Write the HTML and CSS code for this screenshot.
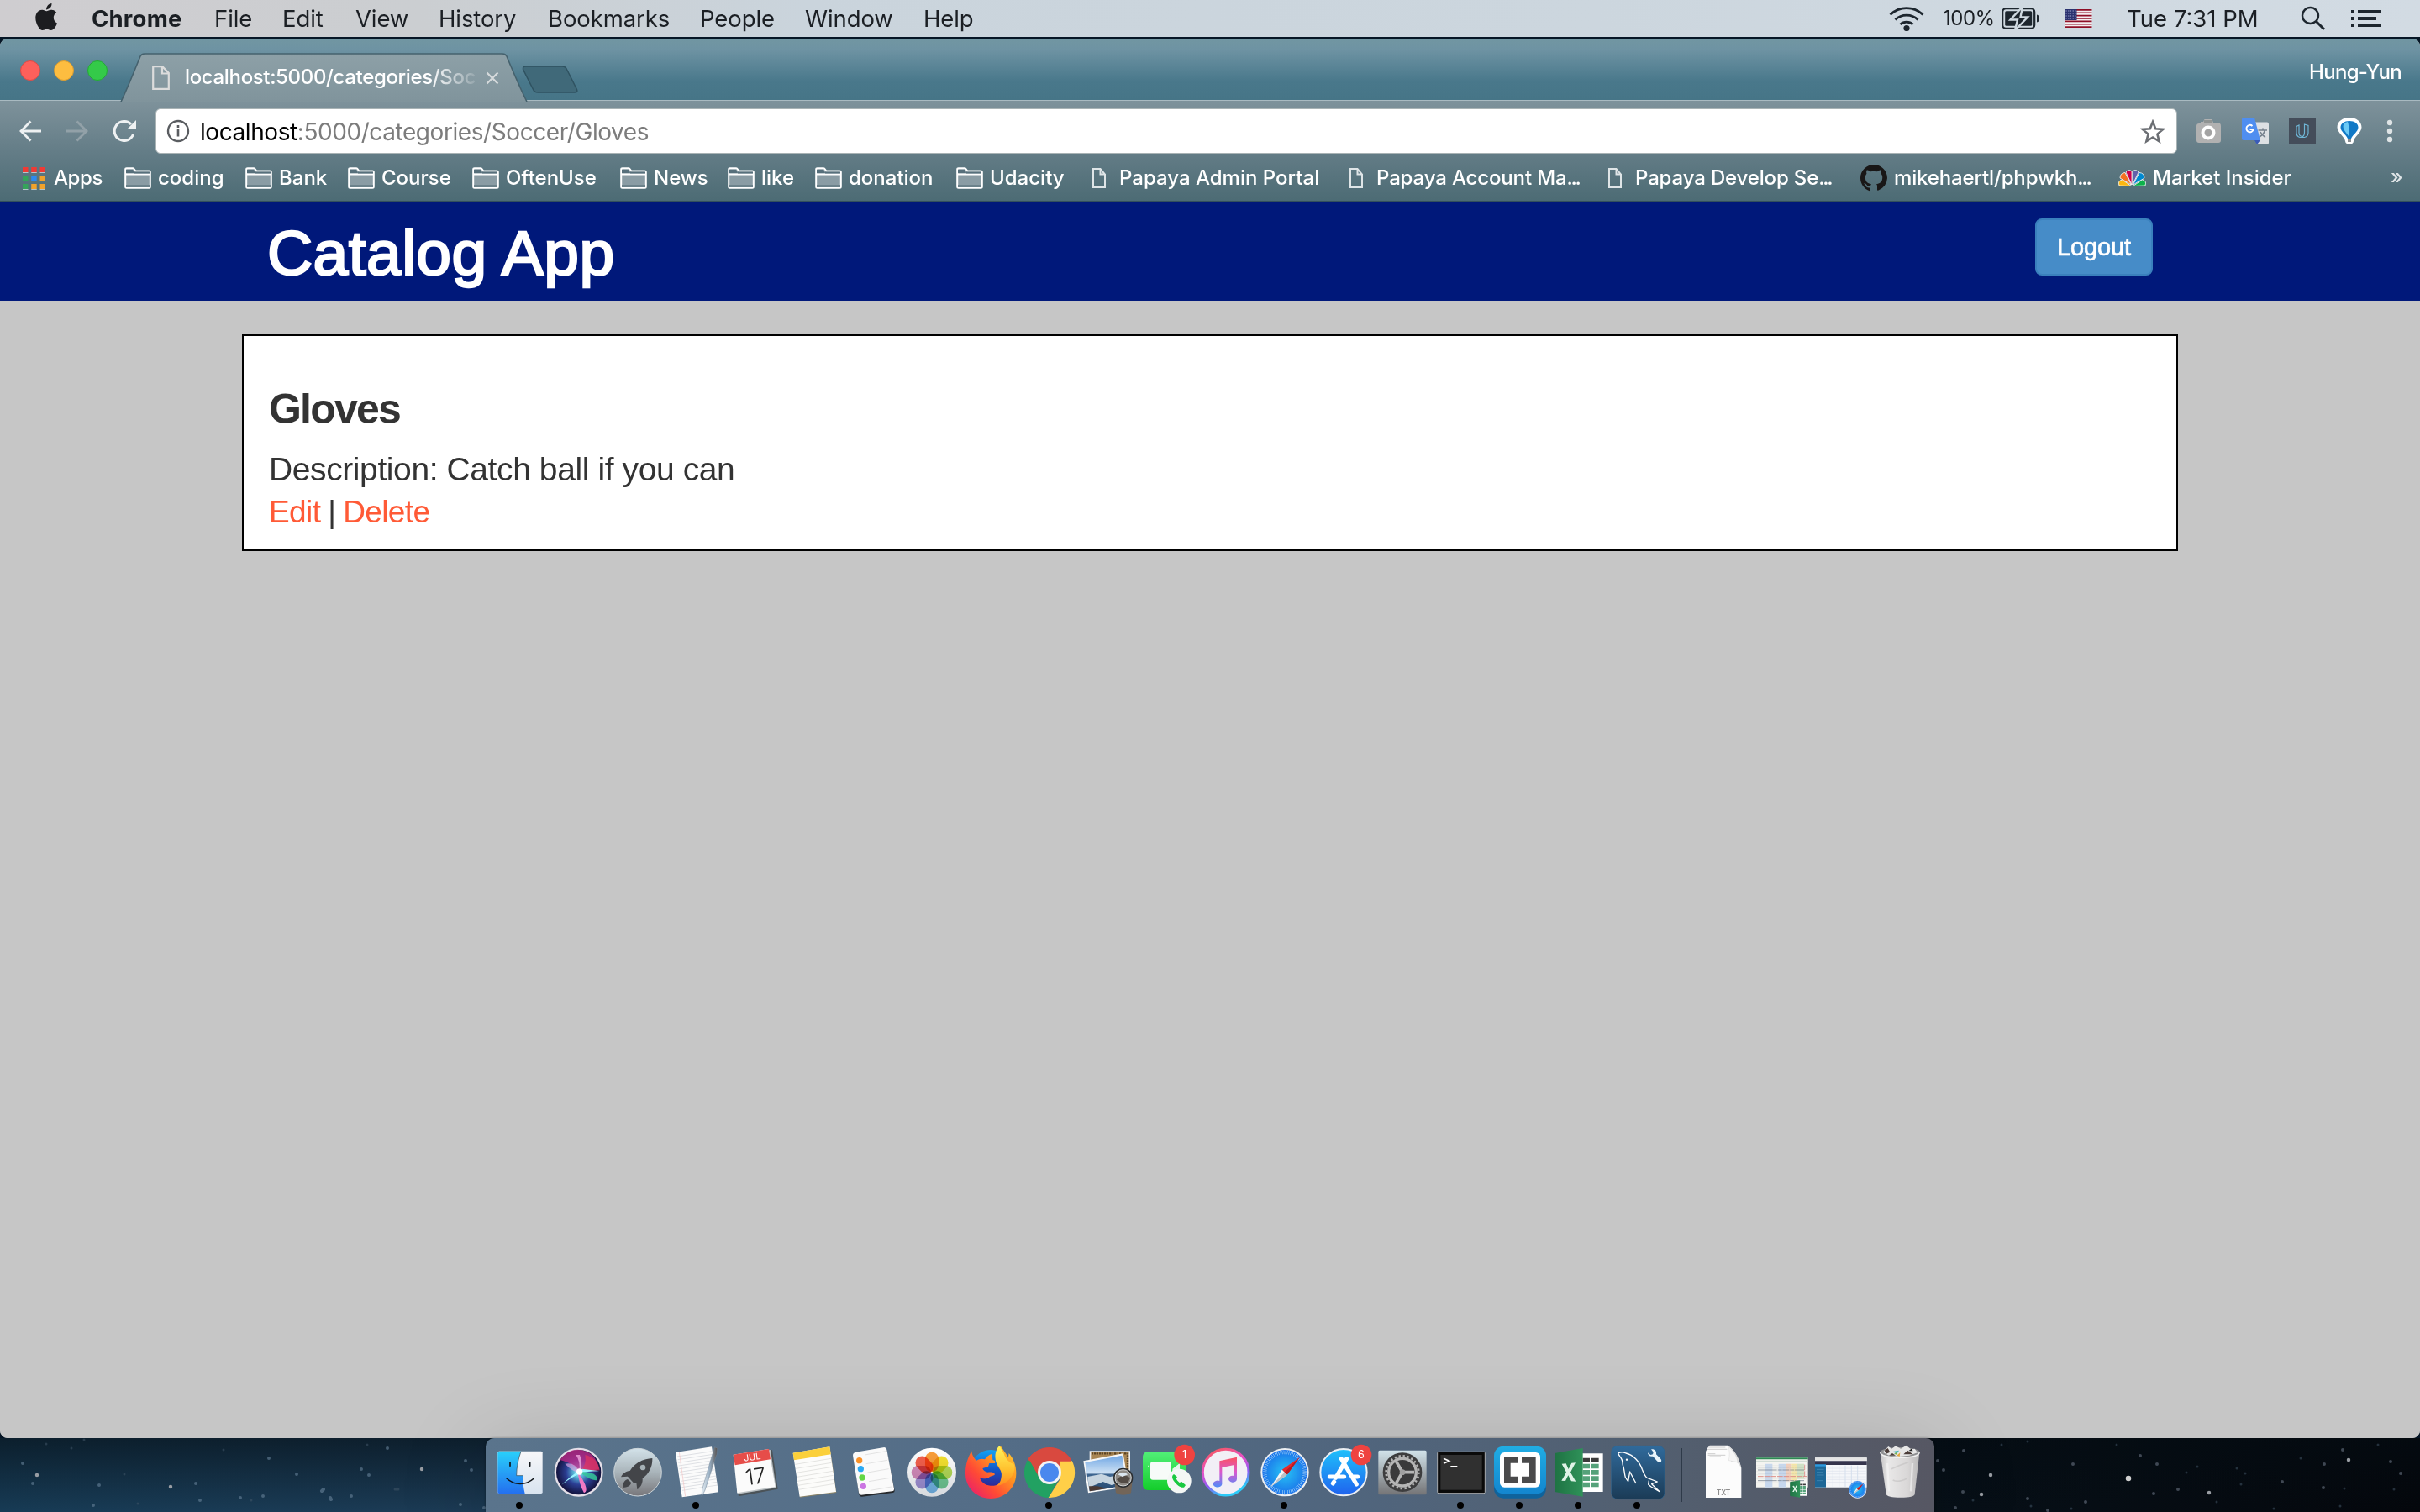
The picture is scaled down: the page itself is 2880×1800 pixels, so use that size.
FILE: index.html
```html
<!DOCTYPE html>
<html lang="en">
<head>
<meta charset="utf-8">
<title>Catalog App</title>
<link rel="stylesheet" href="styles.css">
</head>
<body>
<svg class="defs" width="0" height="0" aria-hidden="true">
  <defs>
    <symbol id="folder" viewBox="0 0 32 26">
      <path d="M1.2 22.8V2.6q0-1.4 1.4-1.4h7.6q1 0 1.5 1l1.6 2.3h16q1.500 0 1.500 1.500v17.300q0 1.500-1.500 1.500H2.700q-1.500 0-1.500-1.500z" fill="#8a9ca4" stroke="#fff" stroke-width="2"/>
      <path d="M1 8.500h30" stroke="#fff" stroke-width="2"/>
      <path d="M2 3h8l2 4H2zM12 5.500h18v2H12z" fill="#566f7b"/>
      <path d="M2 21h28v3H2z" fill="#6c828b"/>
    </symbol>
    <symbol id="page" viewBox="0 0 16 24">
      <path d="M1 1h8.500L15 7.500V23H1zM9.500 1v6.500H15" fill="none" stroke="#dfe5e7" stroke-width="2"/>
    </symbol>
    <linearGradient id="finderBlue" x2="0" y2="1"><stop stop-color="#29d0fb"/><stop offset="1" stop-color="#2470ef"/></linearGradient>
    <linearGradient id="finderWhite" x2="0" y2="1"><stop stop-color="#f7f7f9"/><stop offset="1" stop-color="#d9e4f0"/></linearGradient>
    <radialGradient id="siriBase"><stop stop-color="#d8fbff"/><stop offset=".22" stop-color="#58b9d8"/><stop offset=".55" stop-color="#2c3f95"/><stop offset="1" stop-color="#13123c"/></radialGradient>
    <linearGradient id="launch" x2="0" y2="1"><stop stop-color="#d3e2e9"/><stop offset=".5" stop-color="#a9b4ba"/><stop offset="1" stop-color="#77767a"/></linearGradient>
    <linearGradient id="pen" x2="1"><stop stop-color="#e9f0f5"/><stop offset=".5" stop-color="#9ab0c4"/><stop offset="1" stop-color="#54504f"/></linearGradient>
    <linearGradient id="whiteDisc" x2="0" y2="1"><stop stop-color="#fff"/><stop offset="1" stop-color="#d6d9dd"/></linearGradient>
    <linearGradient id="foxBody" x1="1" x2="0" y2="1"><stop stop-color="#ffd53a"/><stop offset=".35" stop-color="#ff9620"/><stop offset=".65" stop-color="#ff4a35"/><stop offset="1" stop-color="#e3137c"/></linearGradient>
    <linearGradient id="foxFlame" x2="0" y2="1"><stop stop-color="#fff55c"/><stop offset=".6" stop-color="#ffc02e"/><stop offset="1" stop-color="#ff8a1f"/></linearGradient>
    <linearGradient id="foxBlue" x2="0" y2="1"><stop stop-color="#13a3f3"/><stop offset=".5" stop-color="#1357c9"/><stop offset="1" stop-color="#36208c"/></linearGradient>
    <linearGradient id="sky" x2="0" y2="1"><stop stop-color="#6fa6e4"/><stop offset=".5" stop-color="#cfe2f4"/><stop offset=".52" stop-color="#3e6691"/><stop offset="1" stop-color="#27496e"/></linearGradient>
    <linearGradient id="green" x2="0" y2="1"><stop stop-color="#52ef78"/><stop offset="1" stop-color="#14cd2b"/></linearGradient>
    <linearGradient id="ring" x2=".4" y2="1"><stop stop-color="#fb5a4f"/><stop offset=".45" stop-color="#e650c8"/><stop offset=".75" stop-color="#8a5cf6"/><stop offset="1" stop-color="#2dcaf8"/></linearGradient>
    <linearGradient id="note" x2="0" y2="1"><stop stop-color="#fb5062"/><stop offset=".5" stop-color="#d958cf"/><stop offset="1" stop-color="#4f8cf8"/></linearGradient>
    <radialGradient id="compass"><stop stop-color="#28c4f4"/><stop offset="1" stop-color="#1a72ea"/></radialGradient>
    <linearGradient id="store" x2="0" y2="1"><stop stop-color="#1fc1fb"/><stop offset="1" stop-color="#1f62ee"/></linearGradient>
    <linearGradient id="prefs" x2="0" y2="1"><stop stop-color="#d2e3ea"/><stop offset="1" stop-color="#747476"/></linearGradient>
    <linearGradient id="brk" x2="0" y2="1"><stop stop-color="#20ade4"/><stop offset="1" stop-color="#1386cf"/></linearGradient>
    <linearGradient id="xl" x2="1" y2="0"><stop stop-color="#1e7243"/><stop offset="1" stop-color="#2f9259"/></linearGradient>
    <linearGradient id="mysql" x2="0" y2="1"><stop stop-color="#306a9b"/><stop offset="1" stop-color="#1b3b56"/></linearGradient>
    <linearGradient id="trash" x2="1" y2="0"><stop stop-color="#c4c3c4"/><stop offset=".2" stop-color="#e9e8e8"/><stop offset=".7" stop-color="#d9d7d7"/><stop offset="1" stop-color="#b9b8b9"/></linearGradient>
    <symbol id="excel" viewBox="20 34 176 177">
      <path d="M118 55h76v137h-76z" fill="#fff"/>
      <path d="M122 71h25v16h-25zM151 71h28v16h-28z" fill="#3c3c3c"/>
      <path d="M122 92h25v17h-25zM151 92h28v17h-28zM122 114h25v17h-25zM151 114h28v17h-28zM122 136h25v17h-25zM151 136h28v17h-28zM122 158h25v17h-25zM151 158h28v17h-28z" fill="#55a27a"/>
      <path d="M21 54l101-18v173L21 192z" fill="url(#xl)"/>
      <path d="M47 92l15-1 9 20 11-22 14-1-18 34 19 33-16-1-11-21-10 20-14-1 17-30z" fill="#dff3e7"/>
    </symbol>
    <symbol id="safari" viewBox="20 34 176 176">
      <circle cx="108" cy="122" r="86" fill="#eceff2"/>
      <circle cx="108" cy="122" r="80" fill="url(#compass)"/>
      <circle cx="108" cy="122" r="71" fill="none" stroke="#bfe4fb" stroke-width="13" stroke-dasharray="1.600 4.600"/>
      <path d="M161 69l-45 62-18-18z" fill="#e8282c"/><path d="M161 69l-45 62-9-9z" fill="#b81c22"/>
      <path d="M57 175l41-62 18 18z" fill="#f4f4f4"/><path d="M57 175l50-53 9 9z" fill="#b9c0c6"/>
    </symbol>
  </defs>
</svg>

<header class="menubar">
  <svg class="apple" viewBox="2 0 20.500 24" preserveAspectRatio="none"><path fill="#1c1d20" d="M12.152 6.896c-.948 0-2.415-1.078-3.960-1.040-2.040.027-3.910 1.183-4.961 3.014-2.117 3.675-.546 9.103 1.519 12.090 1.013 1.454 2.208 3.090 3.792 3.039 1.520-.065 2.090-.987 3.935-.987 1.831 0 2.350.987 3.960.948 1.637-.026 2.676-1.480 3.676-2.948 1.156-1.688 1.636-3.325 1.662-3.415-.039-.013-3.182-1.221-3.220-4.857-.026-3.040 2.480-4.494 2.597-4.559-1.429-2.090-3.623-2.324-4.390-2.376-2-.156-3.675 1.090-4.610 1.090zM15.530 3.830c.843-1.012 1.400-2.427 1.245-3.830-1.207.052-2.662.805-3.532 1.818-.780.896-1.454 2.338-1.273 3.714 1.338.104 2.715-.688 3.559-1.701"/></svg>
  <nav class="menus">
    <b>Chrome</b><span>File</span><span>Edit</span><span>View</span><span>History</span><span>Bookmarks</span><span>People</span><span>Window</span><span>Help</span>
  </nav>
  <div class="status">
    <svg class="wifi" viewBox="0 0 42 30" fill="none" stroke="#1d262e" stroke-width="2.800"><path d="M1.500 10.500a28 28 0 0 1 39 0M7.500 16.500a19.500 19.500 0 0 1 27 0M13.500 22a11 11 0 0 1 15 0"/><circle cx="21" cy="26.500" r="2.200" fill="#1d262e"/></svg>
    <span class="pct">100%</span>
    <svg class="battery" viewBox="0 0 46 26"><rect x="1.200" y="1.200" width="38" height="23.600" rx="4" fill="none" stroke="#1d262e" stroke-width="2.200"/><rect x="4.200" y="4.200" width="32" height="17.600" rx="1.500" fill="#1d262e"/><path d="M42 8.500q3 .5 3 4.500t-3 4.500z" fill="#1d262e"/><path d="M25-1L10.500 14.500H19L16 27 31 11.500h-8.500z" fill="#1d262e" stroke="#cfd9e1" stroke-width="2.400"/></svg>
    <svg class="flag" viewBox="0 0 32 22"><path fill="#f4eef0" d="M0 0h32v22H0z"/><path d="M0 .85h32M0 4.230h32M0 7.600h32M0 11h32M0 14.400h32M0 17.770h32M0 21.150h32" stroke="#8e0f26" stroke-width="1.700"/><path fill="#2b3270" d="M0 0h14v13H0z"/><path d="M1 2h12M1 5h12M1 8h12M1 11h12" stroke="#aab0d4" stroke-width="1.200" stroke-dasharray="1.200 1.500"/></svg>
    <span class="clock">Tue 7:31 PM</span>
    <svg class="search" viewBox="0 0 30 30" fill="none" stroke="#1d262e"><circle cx="11.500" cy="11.500" r="9.500" stroke-width="2.400"/><path d="M18.500 18.500l9.500 9.500" stroke-width="3"/></svg>
    <svg class="list" viewBox="0 0 36 20" fill="#1d262e"><path d="M0 0h4v4H0zM8 0h28v4H8zM0 8h4v4H0zM8 8h22v4H8zM0 16h4v4H0zM8 16h28v4H8z"/></svg>
  </div>
</header>

<main class="window">
  <div class="tabstrip">
    <div class="lights"><i class="red"></i><i class="amber"></i><i class="green"></i></div>
    <div class="tab">
      <svg class="tab-shape" viewBox="0 0 486 58"><defs><linearGradient id="tabFill" x2="0" y2="1"><stop stop-color="#8da0a7"/><stop offset="1" stop-color="#80949c"/></linearGradient></defs><path d="M1 58C8 44 19 16 24 4q1.500-3 5-3h426q3.500 0 5 3c5 12 17 40 24 54" fill="url(#tabFill)" stroke="#45616d" stroke-width="1.600"/></svg>
      <svg class="tab-icon" viewBox="0 0 21 29"><path d="M1.200 1.200h11L19.800 9v18.800H1.200zM12 1.200V9.500h8" fill="none" stroke="#dcdcdc" stroke-width="2.200"/></svg>
      <span class="tab-title">localhost:5000/categories/Soc</span>
      <svg class="tab-close" viewBox="0 0 16 16"><path d="M1.500 1.500l13 13M14.500 1.500l-13 13" stroke="#d6dadc" stroke-width="2.200"/></svg>
    </div>
    <svg class="newtab" viewBox="0 0 68 34"><path d="M4 1h44q4 0 5.500 3.500l12 24q1.500 3.500-2.500 3.500H19q-4 0-5.500-3.500L1.500 4.500Q1 1 4 1z" fill="#406979" stroke="#2f5260" stroke-width="1.500"/></svg>
    <span class="profile">Hung-Yun</span>
  </div>

  <div class="toolbar">
    <div class="nav-row">
      <svg class="back" viewBox="0 0 26 26" fill="none" stroke="#eef1f2" stroke-width="2.800"><path d="M26 13H2.500M13.500 1.500L2 13l11.500 11.500"/></svg>
      <svg class="forward" viewBox="0 0 26 26" fill="none" stroke="#92a1a8" stroke-width="2.800"><path d="M0 13h23.500M12.500 1.500L24 13 12.500 24.500"/></svg>
      <svg class="reload" viewBox="0 0 28 26"><path d="M24.500 17A11.500 11.500 0 1 1 22 5" fill="none" stroke="#eef1f2" stroke-width="3"/><path d="M28 0v11H17z" fill="#eef1f2"/></svg>
      <div class="omnibox">
        <svg class="info" viewBox="0 0 28 28"><circle cx="14" cy="14" r="12" fill="none" stroke="#5a5d61" stroke-width="2.400"/><path d="M14 12v8.500M14 7v3" stroke="#5a5d61" stroke-width="2.600"/></svg>
        <span class="url"><span class="host">localhost</span>:5000/categories/Soccer/Gloves</span>
        <svg class="star" viewBox="0 0 30 29"><path d="M15 3l3.300 8.300 8.900.6-6.800 5.700 2.200 8.700L15 21.500l-7.600 4.800 2.200-8.700-6.800-5.700 8.900-.6z" fill="none" stroke="#6b6e73" stroke-width="2.600"/></svg>
      </div>
      <svg class="ext cam" viewBox="0 0 32 32"><path d="M2 10q0-3 3-3h2V5h3l1.500-3h9L22 6h5q4 0 4 4v17q0 3-3 3H5q-3 0-3-3z" fill="#b1b1b1"/><path d="M11 3h10v3H11z" fill="#8f9392"/><circle cx="16" cy="18" r="6.500" fill="#a3a3a3" stroke="#fff" stroke-width="4"/></svg>
      <svg class="ext tr" viewBox="0 0 32 32"><path d="M12 5.500h18q2 0 2 2V30q0 2-2 2H18z" fill="#dde0e3"/><path d="M0 2q0-2 2-2h13l7 27H2q-2 0-2-2z" fill="#4f8ef0"/><path d="M15 27h7l-4 5z" fill="#3a5bb8"/><path d="M12.500 10a4.200 4.200 0 1 0 1.200 4H9.500" fill="none" stroke="#fff" stroke-width="2"/><path d="M19.500 15H30M25 12.500V15M27.500 15q-1.500 5-6.500 8M22 17q2 4 6 6.500" fill="none" stroke="#75808c" stroke-width="1.600"/></svg>
      <svg class="ext ud" viewBox="0 0 32 32"><path fill="#444d5a" d="M0 0h32v32H0z"/><path d="M9 10.500l3-1.500v9q0 4 3.500 4.500-1 1-2.500 1-4-1-4-6zM18.500 8l4.500 1.500V18q0 4.500-4.500 5.500h-4q4-1 4-6z" fill="none" stroke="#6fb6d6" stroke-width="1.200"/></svg>
      <svg class="ext bal" viewBox="0 0 32 32"><path d="M16 0C8 0 1.500 4.500 1.500 11.500 1.500 18 10.500 23 11 28q.5 3.800 5 3.800t5-3.800C21.500 23 30.500 18 30.500 11.500 30.500 4.500 24 0 16 0z" fill="#fff"/><path d="M16 4C10 4 5.500 7 5.500 11.500 5.500 17 12 20 14 25h4C20 20 26.500 17 26.500 11.500 26.500 7 22 4 16 4z" fill="#1279c6"/><path d="M14 5c-5 1-6 4-5 8 1 3 4 6 6 9 0-4 1-12-1-17z" fill="#6ccaf6"/><path d="M14 25h4v4h-4z" fill="#8a8d90"/></svg>
      <svg class="dots" viewBox="0 0 8 28" fill="#dfe4e6"><circle cx="4" cy="4" r="3.200"/><circle cx="4" cy="14" r="3.200"/><circle cx="4" cy="24" r="3.200"/></svg>
    </div>
    <div class="bookmarks">
      <span class="bm apps"><svg viewBox="0 0 27 27"><path d="M0 0h6.500v6H0zM10.200 0h6.500v6h-6.500zM20.500 0H27v6h-6.500z" fill="#f03a34"/><path d="M0 10h6.500v6H0zM0 20h6.500v6H0z" fill="#35a35a"/><path d="M10.200 10h6.500v6h-6.500z" fill="#2b8af0"/><path d="M20.500 10H27v6h-6.500zM10.200 20h6.500v6h-6.500zM20.500 20H27v6h-6.500z" fill="#f0a22b"/><path d="M0 6.500h27M0 16.500h27M0 26.500h27" stroke="#b4c4ca" stroke-dasharray="6.500 3.750"/></svg>Apps</span>
      <span class="bm"><svg class="f"><use href="#folder"/></svg>coding</span>
      <span class="bm"><svg class="f"><use href="#folder"/></svg>Bank</span>
      <span class="bm"><svg class="f"><use href="#folder"/></svg>Course</span>
      <span class="bm"><svg class="f"><use href="#folder"/></svg>OftenUse</span>
      <span class="bm"><svg class="f"><use href="#folder"/></svg>News</span>
      <span class="bm"><svg class="f"><use href="#folder"/></svg>like</span>
      <span class="bm"><svg class="f"><use href="#folder"/></svg>donation</span>
      <span class="bm"><svg class="f"><use href="#folder"/></svg>Udacity</span>
      <span class="bm"><svg class="p"><use href="#page"/></svg>Papaya Admin Portal</span>
      <span class="bm long"><svg class="p"><use href="#page"/></svg>Papaya Account Ma<span class="ell">...</span></span>
      <span class="bm long"><svg class="p"><use href="#page"/></svg>Papaya Develop Se<span class="ell">...</span></span>
      <span class="bm long"><svg class="gh" viewBox="0 0 16 16"><path fill="#191717" d="M8 0C3.580 0 0 3.580 0 8c0 3.540 2.290 6.530 5.470 7.590.400.070.550-.170.550-.380 0-.190-.010-.820-.010-1.490-2.010.370-2.530-.490-2.690-.940-.090-.230-.480-.940-.820-1.130-.280-.150-.680-.520-.010-.530.630-.010 1.080.580 1.230.820.720 1.210 1.870.870 2.330.660.070-.520.280-.870.510-1.070-1.780-.200-3.640-.890-3.640-3.950 0-.870.310-1.590.820-2.150-.080-.200-.360-1.020.080-2.120 0 0 .670-.210 2.200.820.640-.180 1.320-.270 2-.270s1.360.090 2 .270c1.530-1.040 2.200-.820 2.200-.820.440 1.100.160 1.920.080 2.120.510.560.820 1.270.820 2.150 0 3.070-1.870 3.750-3.650 3.950.290.250.540.730.540 1.480 0 1.070-.010 1.930-.010 1.930 0 .210.150.460.550.380A8.010 8.010 0 0 0 16 8c0-4.420-3.580-8-8-8z"/></svg>mikehaertl/phpwkh<span class="ell">...</span></span>
      <span class="bm"><svg class="nbc" viewBox="0 0 33 20" stroke="#fff" stroke-width=".8"><path d="M15.500 19.500L1 19q-2-6 3.500-7z" fill="#fcb711"/><path d="M15.500 18L2 10q0-6 6-6.500z" fill="#f37021"/><path d="M16 18L9 3q3-4.500 7-1z" fill="#cc004c"/><path d="M17 18V2q4-3.500 7 1z" fill="#6460aa"/><path d="M17.500 18L25 3.500q6 .500 6 6.500z" fill="#0089d0"/><path d="M17.500 19.500l11-7.500q5.500 1 3.500 7z" fill="#0db14b"/></svg>Market Insider</span>
      <span class="bm more">»</span>
    </div>
  </div>

  <section class="page">
    <div class="navbar">
      <h1>Catalog App</h1>
      <button class="logout">Logout</button>
    </div>
    <article class="card">
      <h3>Gloves</h3>
      <p class="desc">Description: Catch ball if you can</p>
      <p class="actions"><a>Edit</a> | <a>Delete</a></p>
    </article>
  </section>
</main>

<footer class="desk">
  <svg class="stars" viewBox="0 0 2880 88" fill="none" stroke-linecap="round">
    <path stroke="#68829a" stroke-opacity=".6" stroke-width="4" d="M27 30h0M39 54h0M111 80h0M118 56h0M233 54h0M238 74h0M286 71h0M313 69h0M320 24h0M353 43h0M383 63l2-2M393 71l1 2M418 69h0M430 37h0M439 44h0M461 12h0M554 27h0M561 38h0M548 79h0M576 83h0"/>
    <path stroke="#44576a" stroke-opacity=".5" stroke-width="3" d="M100 2h0M266 14h0M437 8h0M55 7h0M148 43h0M85 12h0M164 78h0M299 74h0M470 61h4M2382 8h0M2413 4h0M2348 74h0M2417 81h0M2465 84h0M2519 8h0M2638 76h0M2667 55h0M2672 42h0M2662 36h0M2706 84h0M2738 24h0M2790 60h0M2785 81h0M2830 8h0M2849 61h0M2602 41h0M2615 34h0"/>
    <path stroke="#687180" stroke-opacity=".6" stroke-width="4" d="M2337 15h0M2306 27h0M2313 38h0M2336 64h0M2327 83h0M2413 72h0M2437 86h0M2482 76h0M2467 31h0M2547 21h0M2567 31h0M2563 66h0M2592 61h0M2716 52h0M2766 31h0M2765 59h0M2788 14h0M2845 28h0M2857 42h0"/>
    <path stroke="#999da3" stroke-width="4.500" d="M44 44h0M203 58h0M502 37h0M2369 44h0M2358 67h0M2629 65h0M2795 26h0"/>
    <path stroke="#d0d0d0" stroke-width="6.500" d="M2533 48h0"/>
  </svg>
  <div class="dock">
    <svg class="app" viewBox="0 0 210 264"><rect x="28" y="47" width="160" height="151" rx="5" fill="url(#finderWhite)"/><path d="M33 47h78c-9 25-16 55-16 87h23c0 25 2 45 7 64H33q-5 0-5-5V52q0-5 5-5z" fill="url(#finderBlue)"/><path d="M111 48c-9 25-16 55-16 86h23" fill="none" stroke="#27424f" stroke-width="2"/><path d="M72 87v13M143 87v13M60 144c28 26 68 26 97 0" fill="none" stroke="#101418" stroke-width="5" stroke-linecap="round"/><circle cx="105" cy="240" r="12"/></svg>
    <svg class="app" viewBox="0 0 210 264"><circle cx="107" cy="122" r="87" fill="#e4dfe8"/><circle cx="107" cy="122" r="80" fill="url(#siriBase)"/><path d="M40 78q40-55 100-28 30 14 40 60-50 10-75 8-10-25-65-40z" fill="#c72b8a" opacity=".75"/><path d="M130 60q45 10 52 55-30 3-70 5 25-25 18-60z" fill="#e2355e" opacity=".7"/><path d="M58 92q35-8 52 28-20 5-52-28z" fill="#d9a5e0" opacity=".7"/><path d="M45 168q40-40 75-58l60 8q-50 0-65 8-30 10-70 42z" fill="#9af4ff"/><path d="M108 120q70 0 65 30-20 5-65-30z" fill="#35c99a" opacity=".85"/><path d="M104 122q4 40 22 74 14-4 4-30-8-22-26-44z" fill="#f07ac4"/><path d="M97 60q18 25 12 60 15-30 2-60z" fill="#fbb9ea" opacity=".7"/><circle cx="110" cy="120" r="11" fill="#fff"/></svg>
    <svg class="app" viewBox="0 0 210 264"><circle cx="108" cy="122" r="85" fill="url(#launch)" stroke="#ced6da" stroke-width="3"/><path d="M160 72c-38 2-66 20-80 45-16 2-26 10-32 22l24-2 20 22 11 1 3 24c16-12 20-26 19-40 24-18 36-42 35-72z" fill="#434549"/><circle cx="126" cy="105" r="10" fill="#a6b0b5"/><path d="M72 147c-12 4-18 14-17 30 16 0 26-6 30-17z" fill="#434549"/></svg>
    <svg class="app" viewBox="0 0 210 264"><path d="M33 51l129-20 24 162-130 18z" fill="#fbfbfb"/><path d="M39 66l126-19M41 77l126-19M43 88l126-19M44 99l126-19M46 110l126-19M48 121l126-19M49 132l126-19M51 143l126-19M52 154l126-19M54 165l126-19M55 176l126-19M57 187l126-19" stroke="#cfd2d8" stroke-width="2"/><path d="M46 49l22 160" stroke="#f5c4c4" stroke-width="2"/><path d="M172 32l10 4-2 22-42 128-12 24 2-27z" fill="url(#pen)" stroke="#6f8396" stroke-width="1.500"/><circle cx="105" cy="240" r="12"/></svg>
    <svg class="app" viewBox="0 0 210 264"><path d="M30 70l138-28 20 140-140 26z" fill="#4b5358"/><path d="M34 66l128-24 20 136-138 22z" fill="#b9bfc2"/><path d="M29 59l127-20 23 135-136 22z" fill="#fbfbfb"/><path d="M29 59l127-20 6 37-127 21z" fill="#e64d49"/><g transform="rotate(-8 98 70)" text-anchor="middle"><text x="97" y="79" class="jul">JUL</text><text x="99" y="165" class="day">17</text></g></svg>
    <svg class="app" viewBox="0 0 210 264"><path d="M36 57l129-20 22 158-130 17z" fill="#8b8468"/><path d="M32 53l131-22 23 161-130 17z" fill="#fcfcfa"/><path d="M32 53l131-22 4 27-131 21z" fill="#fbd03a"/><path d="M40 94l128-21M42 109l128-21M44 124l128-21M46 139l128-21M48 154l128-21M50 169l128-21M52 184l128-21" stroke="#d8d8d4" stroke-width="2"/></svg>
    <svg class="app" viewBox="0 0 210 264"><path d="M40 62l116-22 29 148q0 6-6 7l-110 14q-9 1-12-10z" fill="#26292c"/><path d="M46 50l102-17q7 0 9 8l26 140q1 8-7 9L66 203q-7 0-9-8L36 62q0-9 10-12z" fill="#fafafa"/><path d="M78 60l76-13M83 92l76-13M88 123l76-13M93 155l76-13M98 187l76-13" stroke="#d6d6d6" stroke-width="2"/><circle cx="59" cy="80" r="11" fill="#fb9126"/><circle cx="64" cy="110" r="11" fill="#29a9f3"/><circle cx="69" cy="141" r="11" fill="#62d645"/><circle cx="73" cy="172" r="11" fill="#cb76e2"/></svg>
    <svg class="app" viewBox="0 0 210 264"><circle cx="108" cy="122" r="87" fill="url(#whiteDisc)"/><g class="petals"><rect x="84" y="50" width="48" height="70" rx="24" fill="#fb9f3b"/><rect x="84" y="50" width="48" height="70" rx="24" fill="#f6e22e" transform="rotate(45 108 123)"/><rect x="84" y="50" width="48" height="70" rx="24" fill="#b6dc57" transform="rotate(90 108 123)"/><rect x="84" y="50" width="48" height="70" rx="24" fill="#72cb94" transform="rotate(135 108 123)"/><rect x="84" y="50" width="48" height="70" rx="24" fill="#77b9ea" transform="rotate(180 108 123)"/><rect x="84" y="50" width="48" height="70" rx="24" fill="#a393d6" transform="rotate(225 108 123)"/><rect x="84" y="50" width="48" height="70" rx="24" fill="#d68cbb" transform="rotate(270 108 123)"/><rect x="84" y="50" width="48" height="70" rx="24" fill="#f5604c" transform="rotate(315 108 123)"/></g></svg>
    <svg class="app" viewBox="0 0 210 264"><circle cx="108" cy="112" r="70" fill="url(#foxBlue)"/><path d="M40 46C22 78 18 100 18 128c0 50 40 88 90 88s91-38 91-90c0-26-8-50-26-72l-2 14-28-40c-8 22-16 30-16 52 0 24 26 34 22 60-2 22-20 32-42 30-20-2-34-14-38-30 14 8 28 6 36-2 8-4 14-2 18-8-4-10-16-8-26-8-10-2-16-6-18-14l20-6 4-12 20 0c2-6 2-10-8-12l-2-22c-14 4-22 14-26 20-10-4-20-2-30 4-6-6-14-14-17-32z" fill="url(#foxBody)"/><path d="M139 27c-18 20-18 46-8 66 10 16 20 28 14 52-2 12-8 20-16 26 34-6 60-30 64-60 2-14-4-22-8-20-14-6-26-20-30-36z" fill="url(#foxFlame)"/></svg>
    <svg class="app" viewBox="0 0 210 264"><path d="M108 123L30 78a90 90 0 0 1 156 0z" fill="#d8483d"/><path d="M108 123L30 78a90 90 0 0 0 74 135l44-78z" fill="#22a162"/><path d="M104 213l43-68V81h41a90 90 0 0 1-84 132z" fill="#ffcf48"/><path d="M33 73l37 66 38-56h79a90 90 0 0 0-154-10z" fill="#d9493f"/><circle cx="108" cy="123" r="42" fill="#f4f4f4"/><circle cx="108" cy="123" r="33" fill="#4a88ee"/><circle cx="105" cy="240" r="12"/></svg>
    <svg class="app" viewBox="0 0 210 264"><path d="M41 46h145v110H41z" fill="#eee"/><path d="M46 51h135v100H46z" fill="#a98653"/><path d="M50 55h127v90" fill="none" stroke="#5c4526" stroke-width="7" stroke-dasharray="4 3 7 4"/><path d="M19 82l142-27 20 119-145 22z" fill="#f7f7f7"/><path d="M25 87l132-25 17 107-133 21z" fill="url(#sky)"/><path d="M34 138l50-10 30 10 45-8 8 24-48 14-30-12-50 20z" fill="#dfe9ef" opacity=".85"/><path d="M39 172l30 0 35 8-62 10z" fill="#4b3a35"/><path d="M128 142h67l-6 54q-28 14-54 0z" fill="#736558"/><circle cx="161" cy="142" r="35" fill="#2a2c2e"/><circle cx="161" cy="142" r="29" fill="#8f8b86" stroke="#d8dadb" stroke-width="3"/><path d="M138 148q24-26 48-6l-8 18q-22 8-40-12z" fill="#534b45"/><path d="M142 130q18-16 36 0l-20 8z" fill="#dbe6ef"/></svg>
    <svg class="app" viewBox="0 0 210 264"><rect x="21" y="48" width="153" height="138" rx="18" fill="url(#green)"/><rect x="48" y="84" width="75" height="65" rx="9" fill="#f7fbf8"/><path d="M127 110l26-20v46l-26-16z" fill="#e6f5ea"/><path d="M42 104v-6" stroke="#fff" stroke-width="4"/><circle cx="151" cy="153" r="43" fill="#f4f7f5"/><path d="M132 129c-8 5-8 14 2 27 11 14 24 23 34 20l6-8-14-12-8 3c-6-4-9-9-12-14l4-6z" fill="#19c940"/><circle cx="170" cy="60" r="37" fill="#ef4340"/><text x="170" y="72" class="badge">1</text></svg>
    <svg class="app" viewBox="0 0 210 264"><circle cx="107" cy="122" r="82" fill="#f2eff6" stroke="url(#ring)" stroke-width="9"/><path d="M85 82l62-14v78a15 12 0 1 1-9-11V96l-44 9v60a16 12 0 1 1-9-12z" fill="url(#note)"/></svg>
    <svg class="app" viewBox="0 0 210 264"><use href="#safari" x="20" y="34" width="176" height="176"/><circle cx="105" cy="240" r="12"/></svg>
    <svg class="app" viewBox="0 0 210 264"><circle cx="108" cy="122" r="83" fill="url(#store)" stroke="#eceff3" stroke-width="6"/><g stroke="#fff" stroke-width="15" stroke-linecap="round"><path d="M119 74L80 142M100 74l54 91M58 138h52M138 138h20M74 156l-4 6"/></g><circle cx="171" cy="60" r="37" fill="#ef4340"/><text x="171" y="72" class="badge">6</text></svg>
    <svg class="app" viewBox="0 0 210 264"><rect x="22" y="44" width="172" height="158" rx="5" fill="url(#prefs)"/><circle cx="108" cy="122" r="70" fill="#3d3d3e"/><circle cx="108" cy="122" r="58" fill="none" stroke="#b4b4b4" stroke-width="8" stroke-dasharray="7 8.180"/><circle cx="108" cy="122" r="49" fill="#3a3a3b" stroke="#b5b5b5" stroke-width="10"/><path d="M108 122h42M108 122L86 84M108 122l-22 38" stroke="#b5b5b5" stroke-width="11"/><circle cx="108" cy="122" r="10" fill="#a0a0a0"/></svg>
    <svg class="app" viewBox="0 0 210 264"><rect x="23" y="49" width="170" height="148" rx="4" fill="#0a0a0a" stroke="#a9adb0" stroke-width="3"/><rect x="34" y="60" width="148" height="125" fill="#303030"/><path d="M45 73l20 9-20 9" fill="none" stroke="#fff" stroke-width="5"/><path d="M70 101h24" stroke="#fff" stroke-width="4"/><circle cx="105" cy="240" r="12"/></svg>
    <svg class="app" viewBox="0 0 210 264"><rect x="15" y="35" width="186" height="180" rx="34" fill="#0f639c"/><rect x="15" y="29" width="186" height="170" rx="34" fill="url(#brk)"/><rect x="36" y="51" width="144" height="125" rx="16" fill="#fff"/><path d="M51 66h50v23H74v48h27v23H51zM114 66h50v94h-50v-23h27V89h-27z" fill="#4a4a4b"/><circle cx="105" cy="240" r="12"/></svg>
    <svg class="app" viewBox="0 0 210 264"><use href="#excel" x="20" y="34" width="176" height="177"/><circle cx="105" cy="240" r="12"/></svg>
    <svg class="app" viewBox="0 0 210 264"><rect x="14" y="28" width="190" height="190" rx="22" fill="url(#mysql)" stroke="#2b6390" stroke-width="2"/><g fill="none" stroke="#fff" stroke-width="4" stroke-linejoin="round"><path d="M38 54c10-6 20-4 28 0 26 6 48 28 58 58 6 14 10 26 18 30l36 14-20 8 28 27-30-17-10-8 2-14"/><path d="M38 54c2 8 8 12 12 20 6 10 2 16 6 26 4 8 4 26 8 40 4 4 6 12 10 14l6-34 22 42"/></g><circle cx="69" cy="77" r="3.500" fill="#fff"/><path d="M144 52l10 8 8-2 2-8-8-10c12-2 20 6 18 18l16 16q6 8-1 12-6 3-12-4l-15-17c-10 2-18-4-18-13z" fill="#e9f4fb"/><circle cx="105" cy="240" r="12"/></svg>
    <i class="divider"></i>
    <svg class="app" viewBox="0 0 210 264"><path d="M42 48l6-12 8-10h64q34 22 49 82v105H42z" fill="#fcfcfc"/><path d="M120 26q18 12 12 58 24-4 37 24-14-62-49-82z" fill="#dcdcdc"/><path d="M122 30q30 24 34 56l-32-6q6-30-2-50z" fill="#f6f6f6" stroke="#c9c9c9"/><path d="M50 56h26M50 61h62M56 66h40M48 40h70M52 33h60" stroke="#b5b5b5" stroke-width="2"/><text x="105" y="203" class="txt">TXT</text></svg>
    <svg class="app" viewBox="0 0 210 264"><path d="M12 70h185v106H12z" fill="#f4f4f0"/><path d="M12 70h185v6H12z" fill="#2f8a55"/><path d="M12 82h185" stroke="#c9d6ce" stroke-width="3"/><path d="M45 92h25v84H45zM92 92h25v84H92z" fill="#c6d7ee"/><path d="M117 92h22v62h-22z" fill="#f3cdb8"/><path d="M139 92h20v62h-20z" fill="#f6e6a6"/><path d="M159 92h24v54h-24z" fill="#cfe3c4"/><path d="M18 104h165M18 114h165M18 125h165M18 152h165" stroke="#7d8794" stroke-width="2.500" stroke-dasharray="24 3 15 2"/><path d="M18 137h176M185 95v50" stroke="#dd8f88" stroke-width="3" stroke-dasharray="20 3"/><path d="M12 98h185M12 109h185M12 119h185M12 131h185M12 145h185M12 159h185" stroke="#d4d8d6"/><use href="#excel" x="131" y="150" width="65" height="63"/></svg>
    <svg class="app" viewBox="0 0 210 264"><path d="M12 70h185v106H12z" fill="#f5f7fa"/><path d="M12 70h185v12H12z" fill="#e5e5e5"/><path d="M12 82h185v14H12z" fill="#35344c"/><path d="M12 94h39v82H12z" fill="#1d6797"/><path d="M12 94h39v7H12z" fill="#2d9ade"/><path d="M18 112h26M18 122h22M18 132h26M18 142h20M18 152h24" stroke="#4f8fb8" stroke-width="2"/><path d="M54 108h140M54 118h140M54 128h140M54 138h140M54 148h140M54 158h140" stroke="#dde3ec" stroke-width="2"/><path d="M76 98v76M98 98v76M120 98v76M142 98v76M164 98v76" stroke="#d5dfed" stroke-width="3"/><use href="#safari" x="131" y="150" width="66" height="66"/></svg>
    <svg class="app" viewBox="0 0 210 264"><path d="M35 52q70-30 140 0l-17 148q-2 12-50 12t-52-12z" fill="url(#trash)"/><ellipse cx="105" cy="50" rx="70" ry="17" fill="#8e8f91"/><path d="M44 50l20-20 12 8 14-10 18 10 20-12 16 14 14-2 10 14-30 10-36 4-36-4z" fill="#e6e6e6"/><path d="M50 44l12-8 8 14-14 6zM66 62l12-8 12 8zM118 58l14-14 20 14z" fill="#4a3c38"/><path d="M136 46l10-8 6 8z" fill="#1f2021"/><path d="M80 48l22-4-8 12z" fill="#46b7b5"/><path d="M94 62l12-10-2 14z" fill="#e3a83c"/><path d="M84 56l10-4 2 8z" fill="#7fae46"/><path d="M35 50q2 20 70 20t70-20" fill="none" stroke="#f1f1f1" stroke-width="4"/><path d="M60 90l6 100M150 90l-6 100" stroke="#f6f6f6" stroke-width="7" opacity=".6"/><path d="M75 110q30-14 60-24M80 150q20 10 50-6" fill="none" stroke="#c2c0c0" stroke-width="5" opacity=".6"/></svg>
  </div>
</footer>
</body>
</html>
```
FILE: styles.css
```css
* { box-sizing: border-box; }
body {
  margin: 0;
  width: 2880px;
  height: 1800px;
  overflow: hidden;
  display: flex;
  flex-direction: column;
  background: #061626;
  font-family: Inter, "Liberation Sans", sans-serif;
}
svg { display: block; flex: none; }
.defs { position: absolute; }

/* System menu bar */
.menubar {
  flex: none;
  height: 44px;
  margin-bottom: 2px;
  display: flex;
  align-items: center;
  padding: 0 46px 0 42px;
  background: linear-gradient(90deg, #cfcdd0 0, #cbced1 500px, #cad4dc 960px, #ccd6de 1900px, #d2dbe3 100%);
  color: #1b1f24;
  font-size: 27.500px;
  line-height: 44px;
  white-space: nowrap;
}
.apple { width: 27px; height: 32px; margin: -4px 40px 0 0; }
.menus {
  display: grid;
  grid-template-columns: 146px 81px 87px 99px 130px 181px 125px 141px 80px;
  letter-spacing: -.1px;
}
.menus b { font-weight: 700; letter-spacing: .2px; }
.status { margin-left: auto; display: flex; align-items: center; }
.wifi { width: 42px; height: 30px; margin-right: 22px; }
.pct { width: 70px; font-size: 24px; letter-spacing: -.5px; }
.battery { width: 46px; height: 26px; margin-right: 29px; }
.flag { width: 33px; height: 22px; margin-right: 41px; }
.clock { width: 207px; letter-spacing: 0; }
.search { width: 30px; height: 30px; margin-right: 30px; }
.list { width: 36px; height: 20px; }

/* Browser window */
.window {
  flex: none;
  height: 1666px;
  display: flex;
  flex-direction: column;
  border-radius: 9px;
  overflow: hidden;
  background: #c6c6c6;
}
.tabstrip {
  flex: none;
  height: 74px;
  display: flex;
  border-top: 1px solid #aac0c8;
  border-bottom: 1px solid #a9bac1;
  background: linear-gradient(#7196a2 0, #6e93a3 12px, #49788b 50px, #467587 72px);
}
.lights { display: flex; gap: 16px; margin: 25px 0 0 24px; }
.lights i { width: 24px; height: 24px; border-radius: 50%; border: 1px solid; }
.red { background: #fd605b; border-color: #dd4a45 !important; }
.amber { background: #fdbd40; border-color: #dc9d2f !important; }
.green { background: #34ca49; border-color: #24a935 !important; }
.tab {
  position: relative;
  width: 486px;
  height: 58px;
  margin: 16px 0 0 15px;
  display: flex;
  align-items: flex-start;
}
.tab-shape { position: absolute; left: 0; top: 0; width: 486px; height: 58px; z-index: 0; }
.tab-icon { position: relative; width: 21px; height: 29px; margin: 15px 18px 0 38px; }
.tab-title {
  position: relative;
  width: 350px;
  margin-top: 11px;
  line-height: 36px;
  white-space: nowrap;
  color: #fff;
  font-size: 24px;
  font-weight: 500;
  letter-spacing: -.35px;
  -webkit-mask-image: linear-gradient(90deg, #000 290px, transparent 355px);
  mask-image: linear-gradient(90deg, #000 290px, transparent 355px);
}
.tab-close { position: relative; width: 16px; height: 16px; margin: 22px 0 0 8px; }
.newtab { width: 68px; height: 34px; margin: 31px 0 0 -8px; }
.profile { margin: 21px 22px 0 auto; line-height: 36px; color: #fff; font-size: 24px; font-weight: 500; letter-spacing: -.7px; }

.toolbar {
  flex: none;
  height: 120px;
  border-bottom: 1px solid #33505c;
  background: linear-gradient(#7e929b 0, #647d87 60px, #4c6b74 120px);
}
.nav-row { display: flex; align-items: center; height: 56px; padding: 0 32px 0 23px; margin-top: 8px; }
.back, .forward { width: 26px; height: 26px; }
.back { margin-right: 30px; }
.forward { margin-right: 29px; }
.reload { width: 28px; height: 26px; margin-right: 23px; }
.omnibox {
  width: 2406px;
  height: 54px;
  display: flex;
  align-items: center;
  padding: 0 13px 0 12px;
  border: 1px solid #a9b3b5;
  border-radius: 6px;
  background: #fff;
}
.info { width: 28px; height: 28px; margin-right: 12px; }
.url { color: #7c7c7c; font-size: 28px; line-height: 50px; letter-spacing: -.430px; padding-top: 2px; }
.host { color: #000; }
.star { width: 30px; height: 29px; margin-left: auto; }
.ext { width: 32px; height: 32px; }
.cam { margin: 0 24px 0 21px; }
.tr { margin-right: 24px; }
.ud { margin-right: 24px; }
.bal { margin-right: auto; }
.dots { width: 8px; height: 28px; margin-left: auto; }
.bookmarks {
  display: grid;
  grid-template-columns: 121px 144px 122px 148px 176px 128px 104px 168px 162px 306px 308px 300px 307px 324px 40px;
  padding-left: 27px;
  margin-top: 9px;
  height: 36px;
  color: #fff;
  font-size: 24px;
  font-weight: 500;
  line-height: 36px;
  white-space: nowrap;
}
.bm { display: flex; align-items: center; }
.long { letter-spacing: -.150px; }
.ell { letter-spacing: -2.200px; }
.apps { letter-spacing: -.4px; }
.apps svg { width: 27px; height: 27px; margin-right: 10px; }
.f { width: 32px; height: 26px; margin-right: 8px; }
.p { width: 16px; height: 24px; margin-right: 16px; }
.gh { width: 32px; height: 32px; margin-right: 8px; }
.nbc { width: 33px; height: 20px; margin-right: 8px; }
.more { color: #dfe5e7; padding-bottom: 2px; }

/* Catalog page */
.page {
  flex: 1;
  font-family: "Liberation Sans", Arial, sans-serif;
  background: #c6c6c6;
}
.navbar {
  height: 118px;
  display: flex;
  justify-content: space-between;
  align-items: flex-start;
  padding: 21px 318px 0 318px;
  background: #00187a;
}
h1 {
  margin: 0;
  color: #fff;
  font-size: 75px;
  line-height: 80px;
  font-weight: 400;
  letter-spacing: .450px;
  -webkit-text-stroke: 2.400px #fff;
}
.logout {
  width: 140px;
  height: 68px;
  margin-top: -1px;
  padding: 0;
  border: 2px solid #3a80bd;
  border-radius: 8px;
  background: #468cc8;
  color: #fff;
  font: 29px/64px "Liberation Sans", Arial, sans-serif;
  letter-spacing: -.1px;
  -webkit-text-stroke: .7px #fff;
}
.card {
  width: 2304px;
  height: 258px;
  margin: 40px auto 0;
  padding: 61px 30px 0;
  border: 2px solid #000;
  background: #fff;
  color: #333;
}
h3 { margin: 0 0 19px; font-size: 50px; line-height: 52px; letter-spacing: -1.800px; }
p { margin: 0; }
.desc { font-size: 39px; line-height: 54px; letter-spacing: -.4px; }
.actions { font-size: 37px; line-height: 47px; letter-spacing: -.6px; word-spacing: -.8px; }
.actions a { color: #ff5a36; }

/* Desktop strip and dock */
.desk {
  position: relative;
  flex: none;
  height: 88px;
  display: flex;
  justify-content: flex-start;
  padding-left: 578px;
  background:
    linear-gradient(rgba(4, 12, 18, .6), rgba(4, 12, 18, 0)),
    linear-gradient(90deg, #173b55 0, #1c3b55 580px, #071018 2300px, #04070c 100%);
}
.stars { position: absolute; left: 0; top: 0; width: 2880px; height: 88px; }
.dock {
  position: relative;
  display: flex;
  width: 1724px;
  height: 88px;
  padding-left: 5px;
  border-radius: 10px 10px 0 0;
  background: linear-gradient(90deg, #5a748c 0, #546d87 35%, #50657d 60%, #525f70 80%, #565763 100%);
  box-shadow: 0 0 3px rgba(0, 0, 0, .4), 0 20px 110px rgba(0, 0, 0, .18);
}
.app { width: 70px; height: 88px; }
.divider { width: 2px; height: 64px; margin: 12px 14px 0 17px; background: #2e3a49; }
.badge { font-size: 38px; fill: #fff; text-anchor: middle; }
.txt { font: 600 25px Inter, sans-serif; fill: #8d8d8d; text-anchor: middle; }
.jul { font: 32px Inter, sans-serif; fill: #fff; }
.day { font: 300 78px Inter, sans-serif; fill: #222; }
.petals rect { mix-blend-mode: multiply; }
```
